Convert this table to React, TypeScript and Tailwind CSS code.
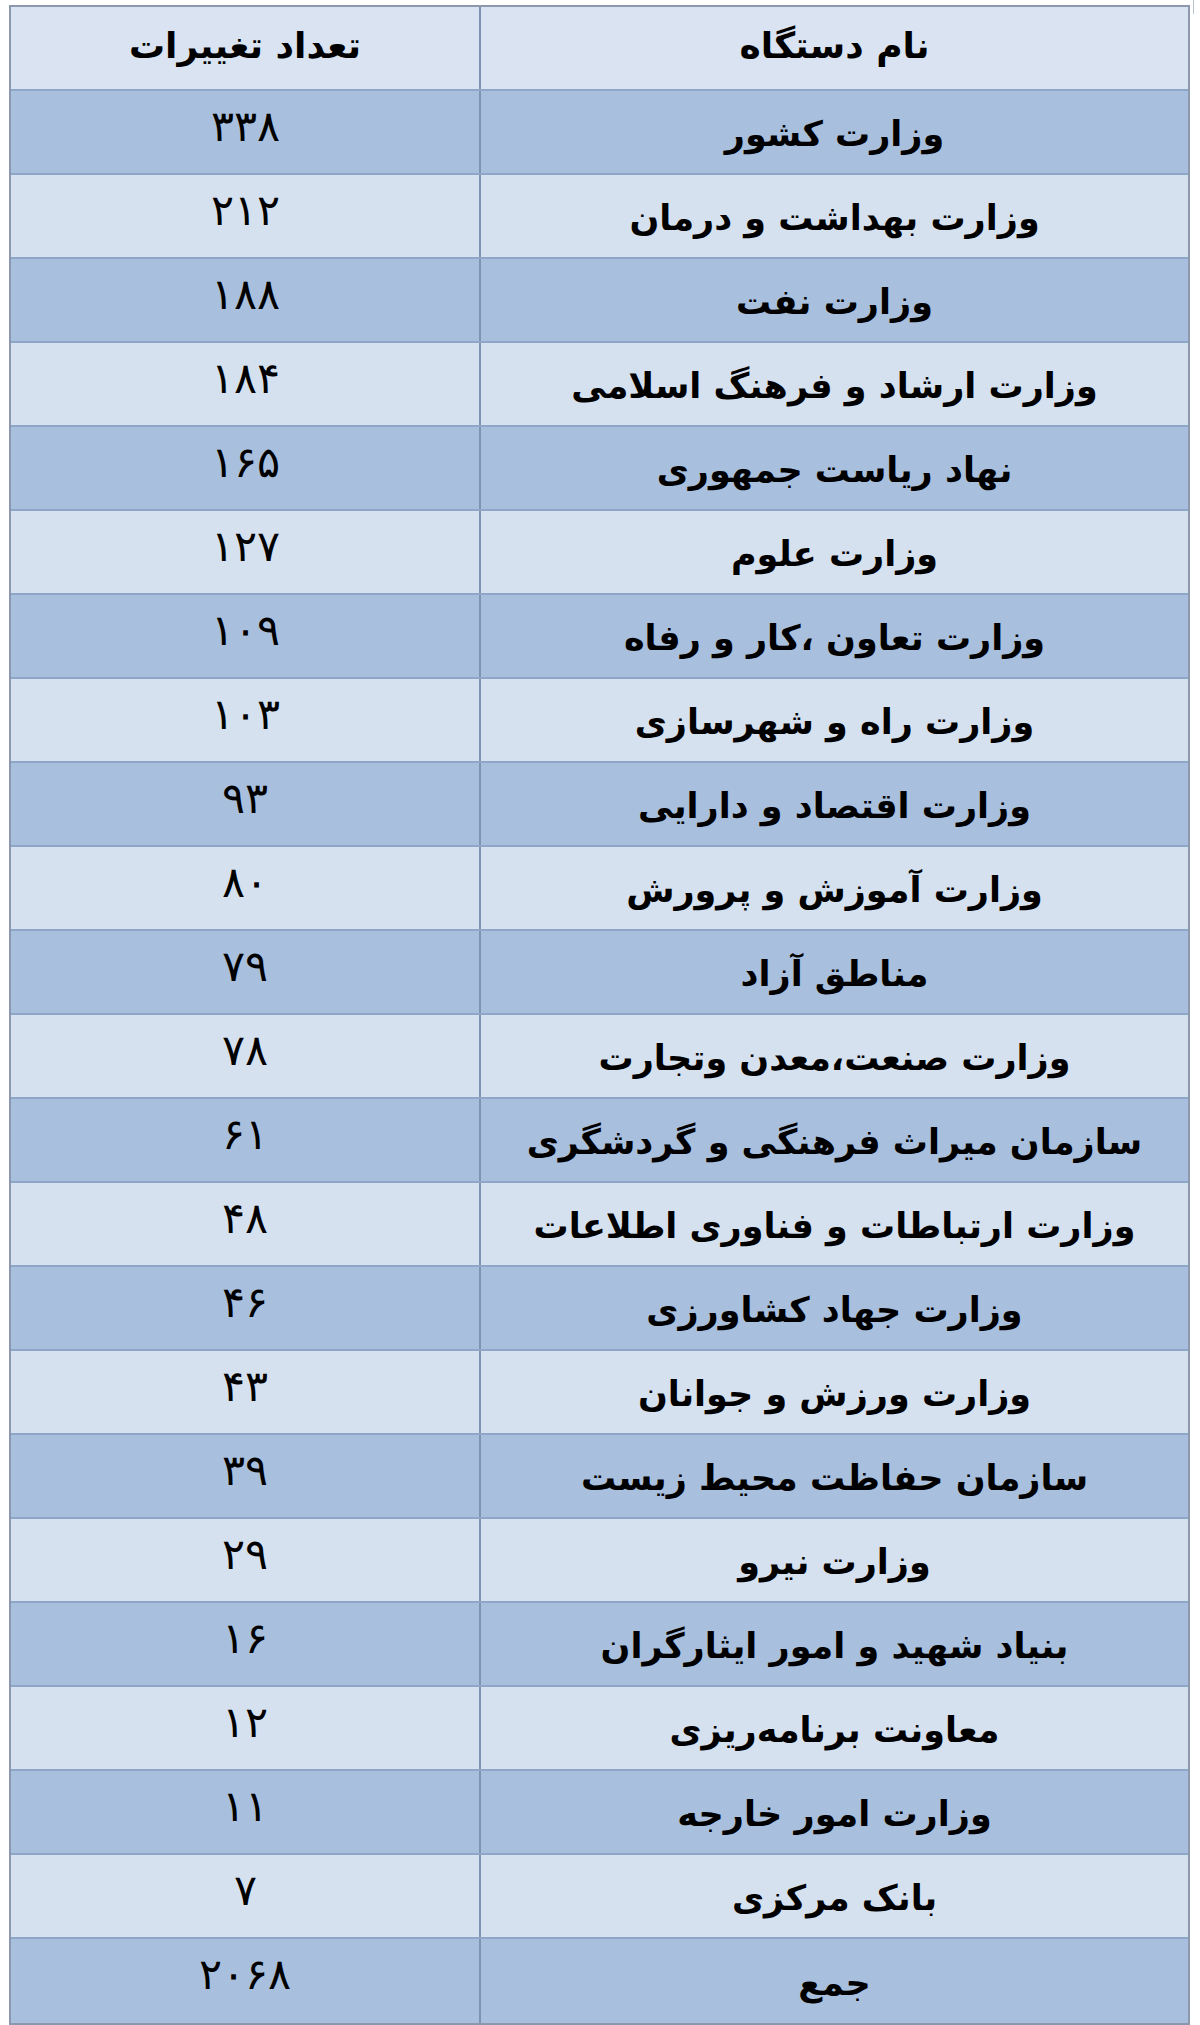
const rows: [string, string][] = [
  ["وزارت کشور", "۳۳۸"],
  ["وزارت بهداشت و درمان", "۲۱۲"],
  ["وزارت نفت", "۱۸۸"],
  ["وزارت ارشاد و فرهنگ اسلامی", "۱۸۴"],
  ["نهاد ریاست جمهوری", "۱۶۵"],
  ["وزارت علوم", "۱۲۷"],
  ["وزارت تعاون ،کار و رفاه", "۱۰۹"],
  ["وزارت راه و شهرسازی", "۱۰۳"],
  ["وزارت اقتصاد و دارایی", "۹۳"],
  ["وزارت آموزش و پرورش", "۸۰"],
  ["مناطق آزاد", "۷۹"],
  ["وزارت صنعت،معدن وتجارت", "۷۸"],
  ["سازمان میراث فرهنگی و گردشگری", "۶۱"],
  ["وزارت ارتباطات و فناوری اطلاعات", "۴۸"],
  ["وزارت جهاد کشاورزی", "۴۶"],
  ["وزارت ورزش و جوانان", "۴۳"],
  ["سازمان حفاظت محیط زیست", "۳۹"],
  ["وزارت نیرو", "۲۹"],
  ["بنیاد شهید و امور ایثارگران", "۱۶"],
  ["معاونت برنامه‌ریزی", "۱۲"],
  ["وزارت امور خارجه", "۱۱"],
  ["بانک مرکزی", "۷"],
  ["جمع", "۲۰۶۸"],
];

export default function App() {
  return (
    <div className="relative min-h-[2025px] w-[1200px] bg-white pt-[5px] pl-[9px]">
      {/* stray cell edge at top right */}
      <div className="absolute right-[6px] top-0 h-[14px] w-px bg-[#b8c2d0]" />
      <div
        dir="rtl"
        className="w-[1181px] border-2 border-[#8b98ad] font-['DejaVu_Sans',sans-serif] text-black"
      >
        <div className="grid h-[84px] grid-cols-[709px_1fr] border-b-2 border-[#8ea6c7] bg-[#d9e3f1]">
          <div className="flex items-center justify-center border-l-2 border-[#7d93b3] pb-1 text-[36px] leading-none font-bold">
            نام دستگاه
          </div>
          <div className="flex items-center justify-center pb-1 text-[36px] leading-none font-bold">
            تعداد تغییرات
          </div>
        </div>
        {rows.map(([name, count], i) => (
          <div
            key={name}
            className={
              "grid h-[84px] grid-cols-[709px_1fr] " +
              (i === rows.length - 1 ? "" : "border-b-2 border-[#8ea6c7] ") +
              (i % 2 === 0 ? "bg-[#a8bfdd]" : "bg-[#d6e1f0]")
            }
          >
            <div className="flex items-center justify-center border-l-2 border-[#7d93b3] pt-1 text-[35px] leading-none font-bold">
              {name}
            </div>
            <div className="flex items-start justify-center pt-[14px] font-['DejaVu_Serif',serif] text-[43px] leading-none">
              {count}
            </div>
          </div>
        ))}
      </div>
    </div>
  );
}
